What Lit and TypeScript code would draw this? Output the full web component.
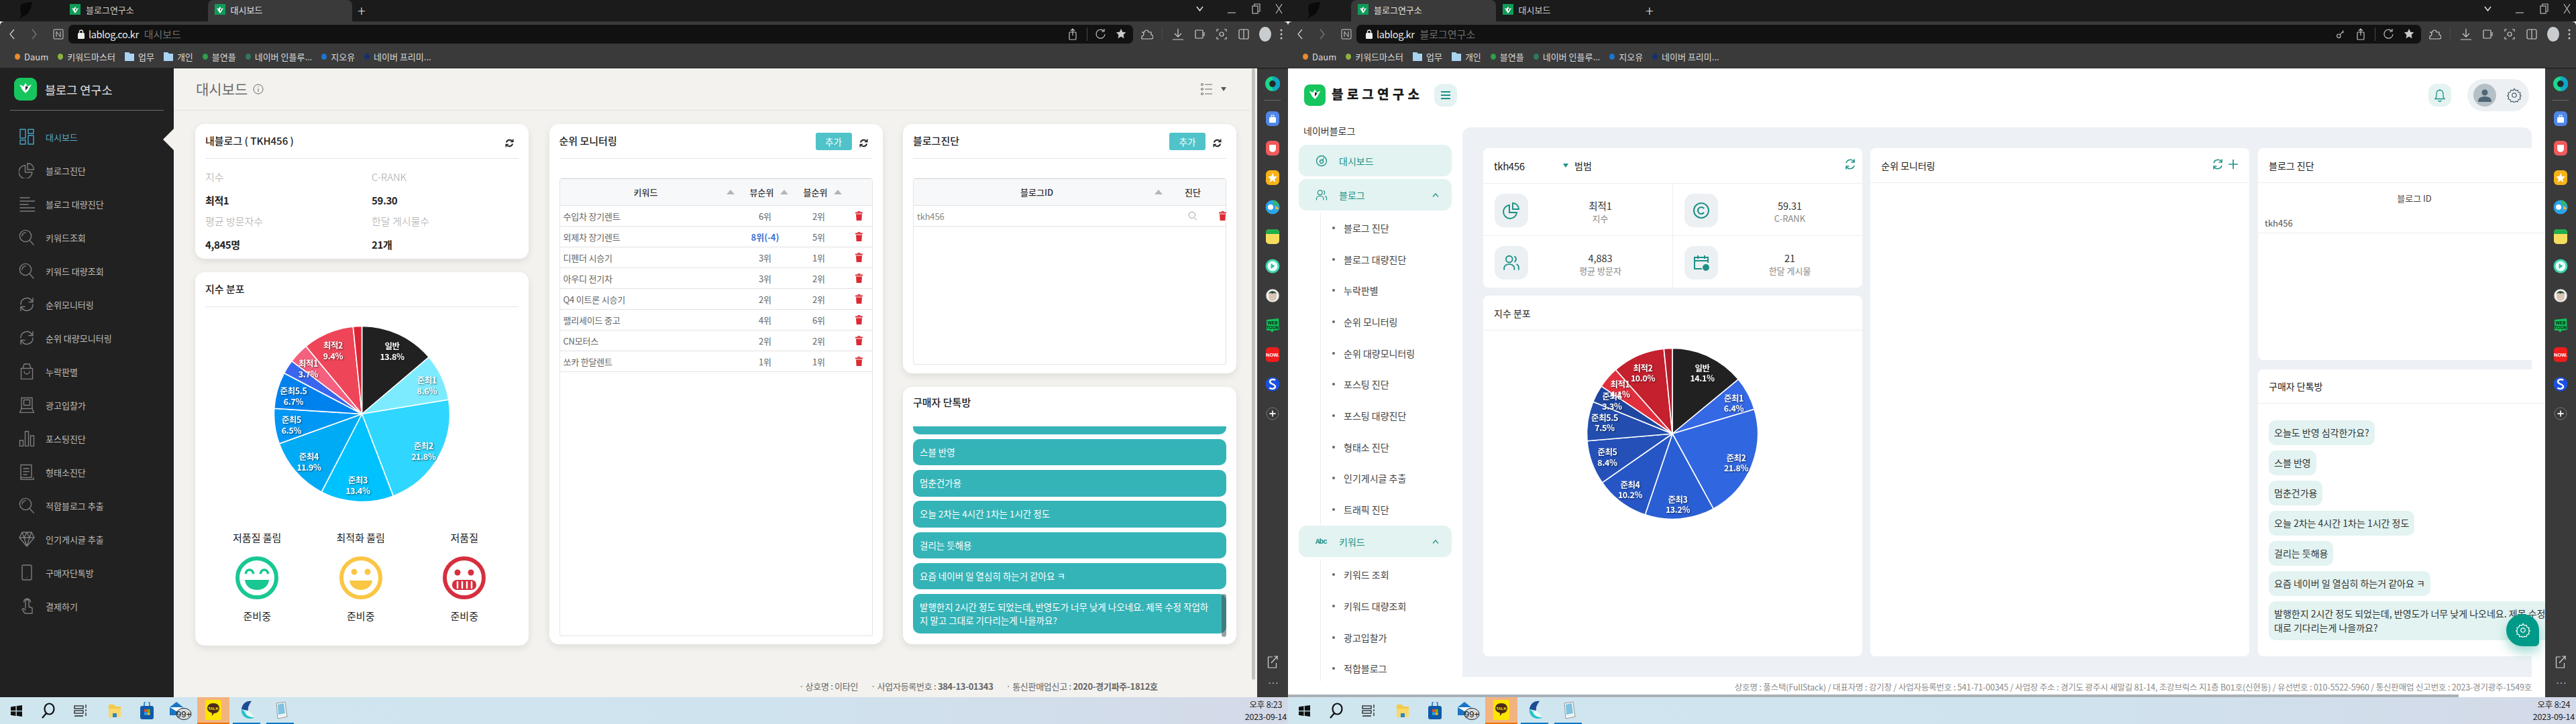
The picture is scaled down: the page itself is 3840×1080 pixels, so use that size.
import { LitElement, html, css, svg, nothing, TemplateResult } from "lit";
import { customElement, property } from "lit/decorators.js";

const FONT = css`"Noto Sans CJK KR", "Noto Sans", sans-serif`;

/* ---------- icon helpers ---------- */
const lineIcon = (body: unknown, size = 24, vb = 24) => html`<svg width=${size} height=${size} viewBox="0 0 ${vb} ${vb}" fill="none" stroke="currentColor" stroke-width="1.4" stroke-linecap="round" stroke-linejoin="round">${body}</svg>`;

const I = {
  dash: svg`<rect x="2" y="1" width="8" height="13"/><rect x="2" y="17" width="8" height="6"/><rect x="14" y="1" width="8" height="6"/><rect x="14" y="10" width="8" height="13"/>`,
  pie: svg`<path d="M9.5 4.5A10 10 0 1 0 20 15H9.5Z"/><path d="M13 1.5A9.5 9.5 0 0 1 22.5 11H13Z"/>`,
  lines: svg`<path d="M2 3h14M2 8h22M2 13h12M2 18h22M2 23h22"/>`,
  search: svg`<circle cx="10" cy="10" r="8.6"/><path d="M16.5 17l5.5 6M5 10a5 5 0 0 1 5-5"/>`,
  sync: svg`<path d="M3 12a9 9 0 0 1 16-6l2 2.5M21 2.5v6h-6M21 12a9 9 0 0 1-16 6l-2-2.5M3 21.5v-6h6"/>`,
  bag: svg`<path d="M3.5 7.5h17v16h-17zM6 7.5L8 1h8l2 6.5M8 12a4 4 0 0 0 8 0"/>`,
  laptop: svg`<rect x="4" y="1.5" width="16" height="16"/><rect x="7.5" y="4.5" width="9" height="8"/><path d="M4 17.5l-2.5 6h21l-2.5-6"/>`,
  bars: svg`<rect x="1.5" y="15" width="5" height="8.5"/><rect x="9.5" y="1.5" width="5" height="22"/><rect x="17.5" y="8" width="5" height="15.5"/>`,
  book: svg`<path d="M3 1.5h16v19H3zM3 20.5v3h19v-3M7 7h8M7 11.5h8M7 16h5"/>`,
  diamond: svg`<path d="M5 2h14l4 8-11 13L1 10zM1 10h22M8 10l4 13 4-13M5 2l3 8 4-8 4 8 3-8"/>`,
  phone: svg`<rect x="5" y="1" width="14" height="22" rx="2"/><path d="M12 19.5h.01"/>`,
  finger: svg`<path d="M10 15V5a2.5 2.5 0 0 1 5 0v8l5 2v8H9l-4-6 2-1.5 3 2.5M7.5 6a5 5 0 0 1 10 0"/>`,
};

const refreshBold = html`<svg class="rf" width="15" height="15" viewBox="0 0 16 16" fill="none" stroke="#222" stroke-width="2"><path d="M13 5.5A5.5 5.5 0 0 0 3 7M3 10.5A5.5 5.5 0 0 0 13 9"/><path d="M13.7 1.5v4.5H9.5M2.3 14.5V10h4.2" stroke-width="1.5"/></svg>`;
const trash = html`<svg width="11" height="14" viewBox="0 0 11 14" fill="#dc2a35"><rect x="3.5" y="0" width="4" height="1.5"/><rect x="0" y="1.5" width="11" height="2" rx=".5"/><path d="M1 4.5h9l-.7 9.5H1.7z"/></svg>`;
const fav = html`<svg width="16" height="16" viewBox="0 0 16 16"><rect width="16" height="16" fill="#0f9d58"/><path d="M3 6l3 1 2-3 2 3 3-1-3 5-2 3-2-3z" fill="#fff"/><path d="M8 7l2 .5-2 3z" fill="#15351f"/></svg>`;
const foxLogo = (w: number, h: number) => html`<svg width=${w} height=${h} viewBox="0 0 34 34"><rect width="34" height="34" rx="9" fill="#17c55f"/><path d="M8 10l6 3 3-5 3 5 6-3-5 9-4 4-4-4z" fill="#fff"/><path d="M17 12l4 2-4 5z" fill="#123"/></svg>`;

/* ---------- pie ---------- */
type Slice = { v: number; c: string };
type Lab = { t: string; p: string; x: number; y: number };
function pie(w: number, h: number, cy: number, r: number, slices: Slice[], labels: Lab[]) {
  const cx = w / 2;
  const total = slices.reduce((s, a) => s + a.v, 0);
  let acc = 0;
  const paths = slices.map((s) => {
    const a0 = (acc / total) * Math.PI * 2;
    acc += s.v;
    const a1 = (acc / total) * Math.PI * 2;
    const large = a1 - a0 > Math.PI ? 1 : 0;
    const p = (a: number) => `${(cx + r * Math.sin(a)).toFixed(2)} ${(cy - r * Math.cos(a)).toFixed(2)}`;
    return svg`<path d="M${cx} ${cy}L${p(a0)}A${r} ${r} 0 ${large} 1 ${p(a1)}Z" fill=${s.c} stroke="#fff" stroke-width="1.6"/>`;
  });
  const txt = labels.map(
    (l) => svg`<text class="pl" x=${cx + l.x} y=${cy + l.y + 4.5}>${l.t}</text><text class="pl" x=${cx + l.x} y=${cy + l.y + 20}>${l.p}</text>`
  );
  return html`<svg class="pie" width=${w} height=${h} viewBox="0 0 ${w} ${h}">${paths}<g class="plg">${txt}</g></svg>`;
}
const pieStyle = css`
  .pie { display: block; }
  .pl { font: 700 12.5px ${FONT}; fill: #fff; text-anchor: middle; letter-spacing: -.4px; }
  .plg { filter: drop-shadow(1px 1px 1px rgba(0,0,0,.55)); }
`;

/* ---------- browser chrome ---------- */
@customElement("browser-window")
class BrowserWindow extends LitElement {
  @property({ type: Number }) active = 0;
  @property() host = "";
  @property() pageTitle = "";
  @property() time = "";
  @property({ type: Boolean }) keyIcon = false;

  static styles = css`
    :host { display: flex; flex-direction: column; width: 1920px; height: 1080px; overflow: hidden; font-family: ${FONT}; position: relative; }
    .tabs { height: 32px; background: #1b1b1b; display: flex; align-items: stretch; flex: none; }
    .deco { width: 94px; flex: none; display: flex; align-items: center; padding-left: 26px; box-sizing: border-box; }
    .tab { width: 215.5px; flex: none; display: flex; align-items: center; gap: 8px; padding: 0 0 4px 10px; box-sizing: border-box; color: #cfcfcf; font-size: 13px; }
    .tab.on { background: #3a3a3a; border-radius: 8px 8px 0 0; color: #e4e4e4; }
    .plus { color: #ddd; font-size: 22px; margin-left: 8px; font-weight: 300; line-height: 30px; }
    .winctl { margin-left: auto; display: flex; align-items: center; color: #bbb; padding-bottom: 6px; }
    .winctl svg { display: block; }
    .toolbar { height: 36px; background: #3a3a3a; flex: none; display: flex; align-items: center; color: #c8c8c8; border-radius: 6px 6px 0 0; padding-top: 1px; box-sizing: border-box; }
    .nav { width: 102px; flex: none; display: flex; align-items: center; padding-left: 13px; box-sizing: border-box; gap: 23px; }
    .addr { width: 1587px; height: 28px; background: #111; border-radius: 7px; flex: none; display: flex; align-items: center; padding-left: 14px; box-sizing: border-box; font-size: 14.5px; }
    .addr .h { color: #e8e8e8; margin-left: 6px; letter-spacing: -.4px; }
    .addr .t { color: #6f6f6f; margin-left: 8px; font-size: 15px; }
    .addr .rt { margin-left: auto; display: flex; align-items: center; gap: 11px; padding-right: 8px; color: #c4c4c4; }
    .sep { width: 1px; height: 20px; background: #4a4a4a; }
    .tools { flex: 1; display: flex; align-items: center; justify-content: space-between; padding: 0 8px 0 10px; color: #d0d0d0; }
    .av { width: 18px; height: 22px; border-radius: 50%; background: #c9cdd0; }
    .marks { height: 34px; background: #3a3a3a; flex: none; display: flex; align-items: center; padding-left: 22px; color: #dcdcdc; font-size: 13px; box-shadow: inset 0 -1px 0 #222; padding-bottom: 2px; box-sizing: border-box; }
    .mk { display: flex; align-items: center; gap: 6px; margin-right: 14px; }
    .dot { width: 8px; height: 9px; border-radius: 50%; }
    .content { flex: 1; min-height: 0; display: flex; }
    .page { flex: 1; min-width: 0; position: relative; overflow: hidden; }
    .edge { width: 46px; flex: none; background: #3a3a3a; display: flex; flex-direction: column; align-items: center; box-shadow: inset 0 1px 0 #2a2a2a; padding-bottom: 6px; box-sizing: border-box; }
    .ei { height: 44px; flex: none; display: flex; align-items: center; justify-content: center; }
    .ei:first-child { margin-top: 1px; }
    .ediv { width: 24px; height: 1px; background: #666; margin: 2px 0 5px; flex: none; }
    .spacer { flex: 1; }
    .eb { height: 31px; flex: none; display: flex; align-items: center; justify-content: center; color: #d5d5d5; }
    .more { font-size: 13px; letter-spacing: -2px; }
    .taskbar { height: 40px; flex: none; background: linear-gradient(90deg, #cfe6ef 0%, #cfe3ee 60%, #d4d9e8 100%); display: flex; align-items: stretch; position: relative; }
    .tb { width: 48px; flex: none; display: flex; align-items: center; justify-content: center; box-sizing: border-box; }
    .tb.folder { margin-left: 3px; }
    .tb.mail { width: 51px; }
    .tb.hot { background: #f3b37f; border-bottom: 2px solid #f07000; }
    .tb.run { box-shadow: inset 0 -2px 0 #0a78c8; width: 41px; }
    .tb.r1 { margin: 0 2px 0 5px; }
    .tb.r2 { margin: 0 0 0 7px; }
    .clock { margin-left: auto; text-align: center; color: #222; font-size: 12.5px; line-height: 18px; padding: 2px 2px 0 0; letter-spacing: -.2px; }
  `;

  tabs() {
    return [0, 1].map((i) => html`<div class="tab ${this.active === i ? "on" : ""}">${fav}<span>${i === 0 ? "블로그연구소" : "대시보드"}</span></div>`);
  }

  render() {
    const marks: [string, string][] = [["Daum", "#e88a2d"], ["키워드마스터", "#8db33c"], ["업무", "f"], ["개인", "f"], ["블연플", "#2f9e4a"], ["네이버 인플루...", "#2f7a5b"], ["지오유", "#1976d2"], ["네이버 프리미...", "#13306e"]];
    const tic = (b: unknown, s = 20) => html`<svg width=${s} height=${s} viewBox="0 0 20 20" fill="none" stroke="currentColor" stroke-width="1.2">${b}</svg>`;
    return html`
      <div class="tabs">
        <div class="deco"><svg width="24" height="28" viewBox="0 0 24 28"><path d="M6 4c5-2 13-4 16-2-1 8-5 18-13 20l-6 4 3-7C3 14 4 8 6 4z" fill="#0a0a0a"/></svg></div>
        ${this.tabs()}
        <div class="plus">+</div>
        <div class="winctl">
          <svg width="140" height="20" viewBox="0 0 140 20" fill="none" stroke="currentColor" stroke-width="1.2"><path d="M4 7l4.5 6L13 7" stroke="#ddd" stroke-width="1.6"/><path d="M50 16h12"/><rect x="87" y="6" width="8" height="11"/><path d="M90 6V3h8v11h-3"/><path d="M122 3l9 14M131 3l-9 14"/></svg>
        </div>
      </div>
      <div class="toolbar">
        <div class="nav">
          <svg width="10" height="16" viewBox="0 0 10 16" fill="none" stroke="#ccc" stroke-width="1.3"><path d="M8 1L2 8l6 7"/></svg>
          <svg width="10" height="16" viewBox="0 0 10 16" fill="none" stroke="#777" stroke-width="1.3"><path d="M2 1l6 7-6 7"/></svg>
          <svg width="16" height="16" viewBox="0 0 16 16" fill="none" stroke="#ccc"><rect x="1" y="1" width="14" height="14" rx="1"/><path d="M5 12V4l6 8V4"/></svg>
        </div>
        <div class="addr">
          <svg width="10" height="14" viewBox="0 0 10 14"><rect x="0" y="5" width="10" height="9" rx="1.5" fill="#eee"/><path d="M2.5 5V3.5a2.5 2.5 0 0 1 5 0V5" fill="none" stroke="#eee" stroke-width="1.3"/></svg>
          <span class="h">${this.host}</span><span class="t">${this.pageTitle}</span>
          <div class="rt">
            ${this.keyIcon ? tic(svg`<circle cx="7" cy="13" r="3"/><path d="M9 11l6-7M13 6l2 2"/>`, 18) : nothing}
            ${tic(svg`<rect x="5" y="7" width="10" height="11" rx="1"/><path d="M10 12V2M7 5l3-3 3 3"/>`)}
            <div class="sep"></div>
            ${tic(svg`<path d="M15 10a6.5 6.5 0 1 1-2-5"/><path d="M14 2v4h-4"/>`)}
            <svg width="18" height="18" viewBox="0 0 20 20" fill="#c9c9c9"><path d="M9 1l2.5 5.5L17 7l-4 4 1 6-5-3-5 3 1-6-4-4 5.5-.5z"/></svg>
          </div>
        </div>
        <div class="tools">
          ${tic(svg`<path d="M3 7h4a3 3 0 1 1 6 0h4v4a3 3 0 1 1 0 6H3v-4a3 3 0 1 0 0-6z"/>`)}
          <div class="sep"></div>
          ${tic(svg`<path d="M10 2v12M5 9l5 5 5-5M2 18h16"/>`)}
          ${tic(svg`<rect x="3" y="4" width="11" height="12" rx="1"/><path d="M16 7v6"/>`)}
          ${tic(svg`<path d="M3 6V3h3M14 3h3v3M17 14v3h-3M6 17H3v-3"/><circle cx="10" cy="10" r="3"/>`)}
          ${tic(svg`<rect x="3" y="3" width="14" height="14" rx="2"/><path d="M10 3v14"/>`)}
          <div class="av"></div>
          <svg width="4" height="16" viewBox="0 0 4 16" fill="#ccc"><circle cx="2" cy="2" r="1.5"/><circle cx="2" cy="8" r="1.5"/><circle cx="2" cy="14" r="1.5"/></svg>
        </div>
      </div>
      <div class="marks">
        ${marks.map(([t, c]) => html`<div class="mk">${c === "f"
          ? html`<svg width="14" height="13" viewBox="0 0 14 13"><path d="M0 0h6l2 2h6v11H0z" fill="#a8d4f2"/></svg>`
          : html`<span class="dot" style="background:${c}"></span>`}<span>${t}</span></div>`)}
      </div>
      <div class="content">
        <div class="page"><slot></slot></div>
        <div class="edge">
          <div class="ei"><svg width="22" height="22"><circle cx="11" cy="11" r="8" fill="none" stroke="#1dd68c" stroke-width="6"/><path d="M11 3a8 8 0 0 1 0 16" fill="none" stroke="#0fa6c9" stroke-width="6"/><circle cx="11" cy="11" r="4.5" fill="#1d2a2a"/></svg></div>
          <div class="ediv"></div>
          <div class="ei"><svg width="22" height="22"><rect width="20" height="22" x="1" rx="6" fill="#4f86e8"/><rect x="6" y="9" width="10" height="8" fill="#fff"/><rect x="9" y="6" width="4" height="3" fill="none" stroke="#fff"/></svg></div>
          <div class="ei"><svg width="22" height="22"><rect x="1" width="20" height="22" rx="6" fill="#f05a5a"/><path d="M6 6h10v6a5 5 0 0 1-10 0z" fill="#fff"/></svg></div>
          <div class="ei"><svg width="22" height="22"><rect x="1" width="20" height="22" rx="6" fill="#f7b316"/><path d="M11 4l2 5 5 .5-4 3.5 1.2 5L11 15l-4.2 3L8 13 4 9.5 9 9z" fill="#fff"/></svg></div>
          <div class="ei"><svg width="22" height="22"><circle cx="11" cy="11" r="10.5" fill="#2aa4e8"/><path d="M11 .5a10.5 10.5 0 0 1 10 8H13z" fill="#33b56a"/><circle cx="8" cy="11" r="4" fill="#fff"/><path d="M15 9l6 4-6 2z" fill="#f0b429"/></svg></div>
          <div class="ei"><svg width="22" height="22"><rect x="1" width="20" height="22" rx="5" fill="#f7dd5e"/><path d="M1 7V5a5 5 0 0 1 5-5h10a5 5 0 0 1 5 5v2z" fill="#1fae4d"/></svg></div>
          <div class="ei"><svg width="22" height="22"><circle cx="11" cy="11" r="10.5" fill="#40d6b0"/><circle cx="11" cy="11" r="7.5" fill="#f0fffb"/><path d="M8.5 7l6 4-6 4z" fill="#35bf9f"/></svg></div>
          <div class="ei"><svg width="22" height="22"><circle cx="11" cy="11" r="10" fill="#f4f4f4" stroke="#666"/><path d="M5 9a6 5 0 0 1 12 0v4a6 6 0 0 1-12 0z" fill="#d9c6b6"/><path d="M5 8c2-5 10-5 12 0l-4-1-2 1-3-1z" fill="#2d4a3a"/></svg></div>
          <div class="ei"><svg width="22" height="22"><path d="M2 3l18-2 1 17-8 1-3 3-2-3-6 0z" fill="#13c25c"/><text x="11" y="10" font-size="6.5" font-weight="700" text-anchor="middle" fill="#0a2a12" font-family="Liberation Sans">WEB</text><text x="11" y="16.5" font-size="6.5" font-weight="700" text-anchor="middle" fill="#0a2a12" font-family="Liberation Sans">TOON</text></svg></div>
          <div class="ei"><svg width="22" height="22"><rect x="1" width="20" height="22" rx="5" fill="#ef1c1c"/><text x="11" y="14" font-size="7.5" font-weight="700" text-anchor="middle" fill="#fff" font-family="Liberation Sans">NOW.</text></svg></div>
          <div class="ei"><svg width="22" height="22"><circle cx="11" cy="11" r="10.5" fill="#1c50e0"/><path d="M15 5c-3-2-8-1-8 2.5S15 11 15 14.5 10 19 6.5 16.5" fill="none" stroke="#fff" stroke-width="2.4"/></svg></div>
          <div class="ei"><svg width="20" height="22"><circle cx="10" cy="11" r="9" fill="none" stroke="#777"/><path d="M10 6.5v9M5.5 11h9" stroke="#f0f0f0" stroke-width="1.8"/></svg></div>
          <div class="spacer"></div>
          <div class="eb"><svg width="18" height="22" viewBox="0 0 18 22" fill="none" stroke="currentColor" stroke-width="1.2"><path d="M9 3H2.5v16h12v-7M7 12L16 2M11 2h5v5"/></svg></div>
          <div class="eb more">···</div>
        </div>
      </div>
      <div class="taskbar">
        <div class="tb"><svg width="17" height="17" viewBox="0 0 17 17" fill="#111"><path d="M0 2.5L7.5 1.2V8H0zM8.8 1L17 0v8H8.8zM0 9.2h7.5V16L0 14.8zM8.8 9.2H17V17l-8.2-1.2z"/></svg></div>
        <div class="tb"><svg width="22" height="24" viewBox="0 0 22 24" fill="none" stroke="#111" stroke-width="2.2"><ellipse cx="12.5" cy="9.5" rx="7" ry="8"/><path d="M8 16l-6 7"/></svg></div>
        <div class="tb"><svg width="20" height="20" viewBox="0 0 20 20" fill="none" stroke="#222" stroke-width="1.3"><rect x="1" y="3" width="13" height="4"/><rect x="1" y="10" width="13" height="4"/><path d="M1 18h13M18 1v5M18 8v3M18 13v5"/></svg></div>
        <div class="tb folder"><svg width="24" height="24" viewBox="0 0 24 24"><path d="M3 3h8l2 3h8v16H3z" fill="#f3c945"/><path d="M3 9h18v13H3z" fill="#fad86a"/><path d="M9 22v-6h6v6z" fill="#2b87c9"/></svg></div>
        <div class="tb"><svg width="24" height="26" viewBox="0 0 24 26"><rect x="2" y="6" width="20" height="20" rx="3" fill="#0f5aa8"/><path d="M8 6V3a4 4 0 0 1 8 0v3" fill="none" stroke="#2d7fd0" stroke-width="1.8"/><rect x="8" y="11" width="4" height="4" fill="#e94e2a"/><rect x="12.5" y="11" width="4" height="4" fill="#7fba00"/><rect x="8" y="15.5" width="4" height="4" fill="#2fa6e8"/><rect x="12.5" y="15.5" width="4" height="4" fill="#ffb900"/></svg></div>
        <div class="tb mail"><svg width="36" height="30" viewBox="0 0 36 30"><path d="M2 10l10-8 10 8v12H2z" fill="#1a75c4"/><path d="M2 10l10 6 10-6" fill="#fff"/><ellipse cx="23" cy="20" rx="11" ry="8.5" fill="#d8dcdf" stroke="#222"/><text x="23" y="25" font-size="13" text-anchor="middle" fill="#111" font-family="Liberation Sans">99+</text></svg></div>
        <div class="tb hot"><svg width="24" height="30" viewBox="0 0 24 30"><rect width="24" height="30" rx="3" fill="#fee500"/><path d="M12 5c6 0 9 3.5 9 7.5s-3 7.5-8 7.5l-3 4v-4.5c-4-1-7-3.5-7-7C3 8.5 6 5 12 5z" fill="#4a2c1a"/><text x="12" y="15" font-size="6" text-anchor="middle" fill="#fee500" font-weight="700" font-family="Liberation Sans">TALK</text></svg></div>
        <div class="tb run r1"><svg width="26" height="32" viewBox="0 0 26 32"><path d="M5 14C6 6 12 1 20 2c-4 5-6 10-5 14z" fill="#1c4c96"/><path d="M5 14c-1 8 5 14 13 14 3 0 5-1 6-2-6 0-12-2-14-8z" fill="#22c3c8"/><path d="M10 18c2 6 8 8 14 8-3-4-6-8-9-10z" fill="#e9f6f6"/></svg></div>
        <div class="tb run r2"><svg width="24" height="30" viewBox="0 0 24 30"><path d="M6 4l13-2 3 22-14 3z" fill="#eef4f6" stroke="#999"/><path d="M8 6l9-2 2 15-10 2z" fill="#7fc3e0"/></svg></div>
        <div class="clock"><div>오후 ${this.time}</div><div>2023-09-14</div></div>
      </div>
    `;
  }
}

/* ---------- left: old dashboard ---------- */
const oldMenu: [string, keyof typeof I][] = [
  ["대시보드", "dash"], ["블로그진단", "pie"], ["블로그 대량진단", "lines"], ["키워드조회", "search"], ["키워드 대량조회", "search"], ["순위모니터링", "sync"], ["순위 대량모니터링", "sync"], ["누락판별", "bag"], ["광고입찰가", "laptop"], ["포스팅진단", "bars"], ["형태소진단", "book"], ["적합블로그 추출", "search"], ["인기게시글 추출", "diamond"], ["구매자단톡방", "phone"], ["결제하기", "finger"],
];
const rows: [string, string, string][] = [
  ["수입차 장기렌트", "6위", "2위"], ["외제차 장기렌트", "8위(-4)", "5위"], ["디펜더 시승기", "3위", "1위"], ["아우디 전기차", "3위", "2위"], ["Q4 이트론 시승기", "2위", "2위"], ["팰리세이드 중고", "4위", "6위"], ["CN모터스", "2위", "2위"], ["쏘카 한달렌트", "1위", "1위"],
];
const oldChats = ["스블 반영", "멈춘건가용", "오늘 2차는 4시간 1차는 1시간 정도", "걸리는 듯해용", "요즘 네이버 일 열심히 하는거 같아요 ㅋ", "발행한지 2시간 정도 되었는데, 반영도가 너무 낮게 나오네요. 제목 수정 작업하지 말고 그대로 기다리는게 나을까요?"];

@customElement("old-dash")
class OldDash extends LitElement {
  static styles = [pieStyle, css`
    :host { display: flex; height: 100%; font-family: ${FONT}; background: #f3f2ee; color: #222; }
    .side { width: 259px; flex: none; background: #212121; position: relative; }
    .brand { height: 62px; margin: 0 15px; border-bottom: 1px solid #6e6e6e; display: flex; align-items: center; padding-left: 6px; gap: 12px; color: #e6e6e6; font-size: 17.5px; }
    .brand svg { display: block; }
    .menu { padding-top: 14px; }
    .mi { height: 50px; display: flex; align-items: center; padding-left: 28px; gap: 16px; color: #7d7d7d; font-size: 13px; }
    .mi span { color: #bdbdbd; }
    .mi.on { color: #4ba3c7; position: relative; }
    .mi.on span { color: #57aac9; }
    .mi svg { display: block; flex: none; }
    .notch { position: absolute; right: 0; top: 90px; width: 0; height: 0; border-style: solid; border-width: 16px 16px 16px 0; border-color: transparent #f3f2ee transparent transparent; }
    .main { flex: 1; min-width: 0; display: flex; flex-direction: column; position: relative; }
    .top { height: 62px; border-bottom: 1px solid #dfdfdc; display: flex; align-items: center; padding: 0 36px 0 33px; box-sizing: content-box; flex: none; margin-right: 10px; }
    .top h1 { font-size: 21px; font-weight: 400; color: #6b6b6b; margin: -2px 8px 0 0; }
    .top .r { margin-left: auto; display: flex; align-items: center; gap: 12px; color: #666; }
    .grid { display: grid; grid-template-columns: 497px 497px 497px; column-gap: 30.5px; padding: 20px 0 0 32px; }
    .col { display: flex; flex-direction: column; gap: 20px; }
    .card { background: #fff; border-radius: 14px; box-shadow: 0 4px 12px rgba(0,0,0,.09); padding: 0 15px; box-sizing: border-box; position: relative; }
    .h201 { height: 201px; } .h556 { height: 556.5px; } .h776 { height: 776px; } .h372 { height: 372px; } .h384 { height: 384px; }
    .ch { height: 52px; border-bottom: 1px solid #e6e6e6; display: flex; align-items: center; font-size: 15px; font-weight: 500; color: #222; padding-bottom: 3px; box-sizing: border-box; }
    .ch.nb { border: 0; height: 59px; padding-bottom: 14px; }
    .ch .sp { flex: 1; }
    .rf { margin: 8px 6px 0 8px; display: block; flex: none; }
    .btn { width: 54px; height: 26px; background: #4fc3c9; color: #fff; border-radius: 3px; display: flex; align-items: center; justify-content: center; font-size: 13.5px; font-weight: 400; margin: 3px 2px 0 0; }
    .stats { display: grid; grid-template-columns: 248px 1fr; padding-top: 10px; }
    .stats div { height: 33px; box-sizing: border-box; display: flex; align-items: center; font-size: 15px; color: #a9a9a9; font-weight: 300; }
    .stats .v { color: #222; font-weight: 700; font-size: 15px; letter-spacing: -.4px; padding-top: 4px; }
    .pierow { padding-top: 8px; margin: 0 -15px; }
    .em { display: grid; grid-template-columns: repeat(3, 154.5px); margin: 24px 0 0 0; text-align: center; font-size: 15px; color: #222; }
    .em .lb { height: 24px; line-height: 24px; }
    .em svg { display: block; margin: 16px auto 13px; }
    .tbl { margin-top: 29px; border: 1px solid #e4e4e4; border-top-color: #cfcfcf; border-radius: 4px; box-sizing: border-box; }
    .t683 { height: 683px; } .t278 { height: 278px; }
    .tr { display: grid; height: 31px; border-bottom: 1px solid #e2e2e2; align-items: center; font-size: 13px; color: #666; box-sizing: border-box; }
    .tr.h { height: 40px; background: #f7f8fa; color: #333; font-weight: 500; }
    .kw { grid-template-columns: 266px 80px 80px 1fr; }
    .idt { grid-template-columns: 377px 78px 1fr; }
    .c { text-align: center; }
    .l { padding-left: 5px; letter-spacing: -.2px; }
    .l.g { color: #888; }
    .ico { display: flex; justify-content: center; color: #888; }
    .s { display: grid; grid-template-columns: 1fr 12px; padding: 0 6px 0 8px; align-items: center; text-align: center; }
    .tri { width: 0; height: 0; border-style: solid; border-width: 0 6px 7px 6px; border-color: transparent transparent #b5b5b5 transparent; }
    .blue { color: #3d74d6; font-weight: 700; }
    .chat { height: 314px; overflow: hidden; display: flex; flex-direction: column; gap: 6.8px; position: relative; font-size: 13.5px; font-weight: 400; }
    .b { background: #35b4b8; color: #fff; border-radius: 10px; padding: 10px 18px 10px 10px; line-height: 19.5px; flex: none; }
    .b.cut { height: 12px; padding: 0; border-radius: 0 0 10px 10px; }
    .thumb { position: absolute; right: 0; bottom: 0; width: 7px; height: 64px; background: rgba(70,80,80,.55); border-radius: 4px; }
    .foot { display: flex; padding: 51px 0 0 932px; font-size: 13px; color: #666; gap: 19px; white-space: nowrap; letter-spacing: -.3px; }
    .foot b { font-weight: 700; }
    .scroll { position: absolute; right: 3px; top: 0; width: 5px; height: 912px; background: #c2c1bd; border-radius: 3px; }
  `];

  render() {
    const pieData: Slice[] = [
      { v: 13.8, c: "#212121" }, { v: 8.6, c: "#7debff" }, { v: 21.8, c: "#2fd6ff" }, { v: 13.4, c: "#00c2ff" }, { v: 11.9, c: "#00abf5" }, { v: 6.5, c: "#0097f5" }, { v: 6.7, c: "#0082ee" }, { v: 2.6, c: "#3a66ee" }, { v: 3.7, c: "#f5607e" }, { v: 9.4, c: "#ee4558" }, { v: 1.6, c: "#dc2636" },
    ];
    const labs: Lab[] = [
      { t: "일반", p: "13.8%", x: 45, y: -101 }, { t: "준최1", p: "8.6%", x: 97, y: -50 }, { t: "준최2", p: "21.8%", x: 92, y: 48 }, { t: "준최3", p: "13.4%", x: -6, y: 99 }, { t: "준최4", p: "11.9%", x: -79, y: 64 }, { t: "준최5", p: "6.5%", x: -105, y: 9 }, { t: "준최5.5", p: "6.7%", x: -102, y: -34 }, { t: "최적1", p: "3.7%", x: -80, y: -75 }, { t: "최적2", p: "9.4%", x: -43, y: -102 },
    ];
    const faces = [
      ["저품질 풀림", "#19c793", "happy"], ["최적화 풀림", "#fbc644", "smile"], ["저품질", "#d62f3f", "grim"],
    ];
    return html`
      <aside class="side">
        <div class="brand">${foxLogo(34, 34)}<span>블로그 연구소</span></div>
        <div class="menu">
          ${oldMenu.map(([t, ic], i) => html`<div class="mi ${i === 0 ? "on" : ""}">${lineIcon(I[ic])}<span>${t}</span></div>`)}
        </div>
        <div class="notch"></div>
      </aside>
      <main class="main">
        <div class="top">
          <h1>대시보드</h1>
          <svg width="16" height="16" viewBox="0 0 16 16" fill="none" stroke="#666"><circle cx="8" cy="8" r="7"/><path d="M8 7v5M8 4v1.2"/></svg>
          <div class="r">
            <svg width="18" height="20" viewBox="0 0 18 20" fill="none" stroke="#666"><circle cx="2" cy="3" r="1.5"/><circle cx="2" cy="10" r="1.5"/><circle cx="2" cy="17" r="1.5"/><path d="M6 3h11M6 10h11M6 17h11"/></svg>
            <svg width="8" height="6" viewBox="0 0 8 6" fill="#555"><path d="M0 0h8L4 6z"/></svg>
          </div>
        </div>
        <div class="grid">
          <div class="col">
            <section class="card h201">
              <div class="ch"><span>내블로그 ( TKH456 )</span><span class="sp"></span>${refreshBold}</div>
              <div class="stats">
                <div>지수</div><div>C-RANK</div>
                <div class="v">최적1</div><div class="v">59.30</div>
                <div>평균 방문자수</div><div>한달 게시물수</div>
                <div class="v">4,845명</div><div class="v">21개</div>
              </div>
            </section>
            <section class="card h556">
              <div class="ch"><span>지수 분포</span></div>
              <div class="pierow">${pie(497, 300, 151.5, 131, pieData, labs)}</div>
              <div class="em">
                ${faces.map(([l]) => html`<div class="lb">${l}</div>`)}
                ${faces.map(([, c, k]) => html`<div>
                  <svg width="64" height="64" viewBox="0 0 64 64">
                    <circle cx="32" cy="32" r="29" fill="#fff" stroke=${c} stroke-width="6"/>
                    ${k === "happy" ? svg`<path d="M15 26c2-8 10-8 12 0M37 26c2-8 10-8 12 0" fill="none" stroke=${c} stroke-width="3.5"/><path d="M14 35h36c-1 10-9 15-18 15s-17-5-18-15z" fill=${c}/>` : nothing}
                    ${k === "smile" ? svg`<circle cx="22" cy="23" r="4.5" fill=${c}/><circle cx="42" cy="23" r="4.5" fill=${c}/><path d="M15 36h34c-1 9-9 14-17 14s-16-5-17-14z" fill=${c}/>` : nothing}
                    ${k === "grim" ? svg`<circle cx="22" cy="24" r="4.5" fill=${c}/><circle cx="42" cy="24" r="4.5" fill=${c}/><rect x="14" y="35" width="36" height="15" rx="7" fill=${c}/><path d="M22 38v9M29 38v9M36 38v9M43 38v9" stroke="#fff" stroke-width="2.5" stroke-linecap="round"/>` : nothing}
                  </svg><div class="lb">준비중</div></div>`)}
              </div>
            </section>
          </div>
          <div class="col">
            <section class="card h776">
              <div class="ch"><span>순위 모니터링</span><span class="sp"></span><div class="btn">추가</div>${refreshBold}</div>
              <div class="tbl t683">
                <div class="tr h kw">
                  <div class="s"><span>키워드</span><i class="tri"></i></div>
                  <div class="s"><span>뷰순위</span><i class="tri"></i></div>
                  <div class="s"><span>블순위</span><i class="tri"></i></div>
                  <div></div>
                </div>
                ${rows.map(([k, a, b]) => html`<div class="tr kw"><div class="l">${k}</div><div class="c ${a.includes("(") ? "blue" : ""}">${a}</div><div class="c">${b}</div><div class="ico">${trash}</div></div>`)}
              </div>
            </section>
          </div>
          <div class="col">
            <section class="card h372">
              <div class="ch"><span>블로그진단</span><span class="sp"></span><div class="btn">추가</div>${refreshBold}</div>
              <div class="tbl t278">
                <div class="tr h idt">
                  <div class="s"><span>블로그ID</span><i class="tri"></i></div>
                  <div class="c">진단</div>
                  <div></div>
                </div>
                <div class="tr idt"><div class="l g">tkh456</div><div class="ico"><svg width="14" height="14" viewBox="0 0 24 24" fill="none" stroke="#888" stroke-width="1.5"><circle cx="10" cy="10" r="8"/><path d="M16 17l6 6"/></svg></div><div class="ico">${trash}</div></div>
              </div>
            </section>
            <section class="card h384">
              <div class="ch nb"><span>구매자 단톡방</span></div>
              <div class="chat">
                <div class="b cut"></div>
                ${oldChats.map((c) => html`<div class="b">${c}</div>`)}
                <i class="thumb"></i>
              </div>
            </section>
          </div>
        </div>
        <div class="foot">
          <span>· 상호명 : 이타인</span><span>· 사업자등록번호 : <b>384-13-01343</b></span><span>· 통신판매업신고 : <b>2020-경기파주-1812호</b></span>
        </div>
        <div class="scroll"></div>
      </main>
    `;
  }
}

/* ---------- right: new dashboard ---------- */
const sub1 = ["블로그 진단", "블로그 대량진단", "누락판별", "순위 모니터링", "순위 대량모니터링", "포스팅 진단", "포스팅 대량진단", "형태소 진단", "인기게시글 추출", "트래픽 진단"];
const sub2 = ["키워드 조회", "키워드 대량조회", "광고입찰가", "적합블로그"];
const newChats = ["오늘도 반영 심각한가요?", "스블 반영", "멈춘건가용", "오늘 2차는 4시간 1차는 1시간 정도", "걸리는 듯해용", "요즘 네이버 일 열심히 하는거 같아요 ㅋ", "발행한지 2시간 정도 되었는데, 반영도가 너무 낮게 나오네요. 제목 수정 작업하지 말고 그대로 기다리는게 나을까요?"];
const TEAL = "#1c9186";

@customElement("new-dash")
class NewDash extends LitElement {
  static styles = [pieStyle, css`
    :host { display: flex; flex-direction: column; height: 100%; font-family: ${FONT}; background: #fff; color: #222; position: relative; }
    .bar { height: 80px; flex: none; display: flex; align-items: center; padding: 0 24px; box-sizing: border-box; }
    .bar svg { display: block; }
    .word { font-size: 19px; font-weight: 900; letter-spacing: 5.2px; color: #1a1a1a; margin: -6px 0 0 9px; width: 153px; white-space: nowrap; }
    .iconbtn { width: 34px; height: 34px; border-radius: 12px; background: #e4f3f1; display: flex; align-items: center; justify-content: center; flex: none; color: #1c9186; }
    .grow { flex: 1; }
    .pill { width: 92px; height: 48px; border-radius: 24px; background: #ecf0f3; margin-left: 24px; display: flex; align-items: center; padding-left: 9px; box-sizing: border-box; gap: 16px; }
    .gearc { color: #4b5b66; display: block; }
    .body { flex: 1; min-height: 0; display: flex; }
    .nav { width: 260px; flex: none; padding: 0 0 0 16px; box-sizing: border-box; overflow: hidden; margin-bottom: -5px; }
    .cap { font-size: 14px; line-height: 26px; padding: 0 0 8px 7px; color: #333; }
    .mi { width: 228px; height: 47px; border-radius: 12px; background: #e3f3f1; color: #1c9186; display: flex; align-items: center; padding: 0 0 0 25px; box-sizing: border-box; gap: 17px; font-size: 14px; margin-bottom: 4px; }
    .mi.e { margin-bottom: 2.6px; }
    .mi.k { margin-top: 1px; }
    .mi .txt { flex: 1; }
    .mi .car { margin-right: 19px; display: block; }
    .abc { width: 18px; font: 700 11px "Liberation Mono", monospace; letter-spacing: -1px; }
    .subs { margin: 0 0 0 32px; border-left: 1px solid #e9edf0; }
    .sub { height: 46.7px; display: flex; align-items: center; padding-left: 17px; gap: 13px; font-size: 14px; color: #444; }
    .sub i { width: 4px; height: 4px; border-radius: 50%; background: #666; flex: none; }
    .main { width: 1594px; height: 820px; margin-top: 8px; flex: none; background: #edf1f5; border-radius: 12px 12px 0 0; display: grid; grid-template-columns: 564.5px 565px 565px; column-gap: 12.75px; padding: 31px 0 31px 31px; box-sizing: border-box; }
    .col { display: flex; flex-direction: column; min-width: 0; }
    .g12 { gap: 12px; } .g14 { gap: 14px; }
    .card { background: #fff; border-radius: 8px; box-sizing: border-box; }
    .n208 { height: 208px; } .n538 { height: 538px; } .n758 { height: 758px; } .n316 { height: 316px; } .n428 { height: 428px; }
    .ch { height: 52px; border-bottom: 1px solid #eceef0; display: flex; align-items: center; padding: 0 17px 0 16px; font-size: 14px; box-sizing: border-box; color: #222; flex: none; }
    .ch svg { display: block; }
    .rfn { margin-top: -4px; }
    .ch.a { height: 53px; }
    .ch.a .rfn { margin-right: -8px; }
    .ch.t { height: 51px; }
    .who { width: 103px; font-size: 15px; letter-spacing: -.4px; }
    .owner { margin-left: 9px; }
    .plusi { margin: -4px 0 0 7px; }
    .st { display: grid; grid-template-columns: 283px 281px; }
    .cell { height: 77.5px; display: flex; align-items: center; padding: 4px 0 0 17px; box-sizing: border-box; border-bottom: 1px solid #eceef0; text-align: center; }
    .cell:nth-child(odd) { border-right: 1px solid #eceef0; }
    .cell:nth-last-child(-n+2) { border-bottom: 0; }
    .tile { width: 50px; height: 50px; border-radius: 14px; background: #ecf0f3; display: flex; align-items: center; justify-content: center; flex: none; color: #1c9186; }
    .cv { flex: 1; font-size: 14.5px; color: #333; line-height: 19px; padding-top: 4px; }
    .cv small { display: block; font-size: 13px; color: #888; }
    .idh { height: 44px; display: flex; align-items: center; justify-content: center; width: 466px; font-size: 13px; color: #444; }
    .idr { height: 30px; border-bottom: 1px solid #eceef0; display: flex; align-items: center; padding-left: 10px; font-size: 13px; color: #555; }
    .chat { padding: 25px 0 0 16px; display: flex; flex-direction: column; align-items: flex-start; gap: 8px; }
    .b { background: #e2f3f1; border-radius: 10px; padding: 8px; font-size: 14px; line-height: 21px; color: #333; box-sizing: border-box; max-width: 526px; flex: none; }
    .foot { height: 25px; flex: none; font-size: 12.5px; color: #8a8a8a; text-align: right; padding-right: 20px; line-height: 28px; white-space: nowrap; letter-spacing: -.17px; }
    .hs { height: 4px; flex: none; }
    .hs div { width: 1745px; height: 4px; background: #a9b0b6; }
    .fab { position: absolute; right: 9px; bottom: 76px; width: 49px; height: 48px; border-radius: 50% 50% 6px 50%; background: #009a88; box-shadow: 0 9px 16px rgba(0,154,136,.35); display: flex; align-items: center; justify-content: center; color: #fff; }
  `];

  render() {
    const data: Slice[] = [
      { v: 14.1, c: "#212121" }, { v: 6.4, c: "#3468e4" }, { v: 21.8, c: "#3066e0" }, { v: 13.2, c: "#2a5ed4" }, { v: 10.2, c: "#2656c6" }, { v: 8.4, c: "#2450b8" }, { v: 7.5, c: "#234eaf" }, { v: 3.3, c: "#1f46a0" }, { v: 4.1, c: "#e0303e" }, { v: 10, c: "#c4202e" }, { v: 1.6, c: "#b01c2c" },
    ];
    const labs: Lab[] = [
      { t: "일반", p: "14.1%", x: 44.5, y: -98 }, { t: "준최1", p: "6.4%", x: 91.5, y: -53 }, { t: "준최2", p: "21.8%", x: 95, y: 36 }, { t: "준최3", p: "13.2%", x: 8, y: 98 }, { t: "준최4", p: "10.2%", x: -63, y: 76 }, { t: "준최5", p: "8.4%", x: -97, y: 27.5 }, { t: "준최5.5", p: "7.5%", x: -101, y: -24 }, { t: "준최6", p: "3.3%", x: -90, y: -56 }, { t: "최적1", p: "4.1%", x: -78, y: -74 }, { t: "최적2", p: "10.0%", x: -44, y: -98 },
    ];
    const gear = (s: number) => html`<svg width=${s} height=${s} viewBox="0 0 24 24" fill="none" stroke="currentColor" stroke-width="1.3"><circle cx="12" cy="12" r="3.5"/><path d="M12 1.5l2 3 3.5-.8 1 3.4 3.4 1-.8 3.4 2 1.5-2 2 .8 3.4-3.4 1-1 3.4-3.5-.8-2 2.5-2-2.5-3.5.8-1-3.4-3.4-1 .8-3.4-2-2 2-1.5-.8-3.4 3.4-1 1-3.4 3.5.8z"/></svg>`;
    const refresh = html`<svg class="rfn" width="18" height="18" viewBox="0 0 18 18" fill="none" stroke=${TEAL} stroke-width="1.6"><path d="M14.5 5A6.5 6.5 0 0 0 3 7M3.5 13A6.5 6.5 0 0 0 15 11"/><path d="M15 1.5V6h-4.5M3 16.5V12h4.5"/></svg>`;
    const user = (s: number) => html`<svg width=${s} height=${s} viewBox="0 0 24 24" fill="none" stroke=${TEAL} stroke-width="1.7"><circle cx="9" cy="7" r="4.5"/><path d="M2 22v-3a7 5 0 0 1 14 0v3M16 3a4.5 4.5 0 0 1 0 8M19 14a6 5 0 0 1 3 5v3"/></svg>`;
    const card = (ic: unknown, v: string, l: string) => html`<div class="cell"><div class="tile">${ic}</div><div class="cv">${v}<small>${l}</small></div></div>`;
    const caret = html`<svg class="car" width="10" height="6" viewBox="0 0 10 6" fill="none" stroke="currentColor" stroke-width="1.2"><path d="M1 5.5L5 1l4 4.5"/></svg>`;
    return html`
      <header class="bar">
        ${foxLogo(32, 32)}
        <div class="word">블로그연구소</div>
        <div class="iconbtn"><svg width="16" height="14" viewBox="0 0 16 14" stroke="currentColor" stroke-width="2"><path d="M1 2h14M1 7h14M1 12h14"/></svg></div>
        <div class="grow"></div>
        <div class="iconbtn"><svg width="18" height="20" viewBox="0 0 18 20" fill="none" stroke="currentColor" stroke-width="1.3"><path d="M9 2.5c-3 0-5 2-5 6v4l-2 3h14l-2-3v-4c0-4-2-6-5-6zM7 17.5a2 2 0 0 0 4 0M9 1v1.5"/></svg></div>
        <div class="pill">
          <svg width="34" height="34" viewBox="0 0 34 34"><circle cx="17" cy="17" r="17" fill="#b5bfc6"/><circle cx="17" cy="13" r="4.5" fill="#4e6676"/><path d="M7 27c0-6 4-8 10-8s10 2 10 8z" fill="#4e6676"/></svg>
          <span class="gearc">${gear(22)}</span>
        </div>
      </header>
      <div class="body">
        <nav class="nav">
          <div class="cap">네이버블로그</div>
          <div class="mi"><svg width="18" height="18" viewBox="0 0 18 18" fill="none" stroke="currentColor" stroke-width="1.3"><circle cx="9" cy="9" r="7.5"/><circle cx="9" cy="10" r="2.5"/><path d="M10.5 8l2-3.5"/></svg><span class="txt">대시보드</span></div>
          <div class="mi e"><svg width="18" height="18" viewBox="0 0 24 24" fill="none" stroke="currentColor" stroke-width="1.6"><circle cx="9" cy="7" r="4.5"/><path d="M2 22v-3a7 5 0 0 1 14 0v3M16 3a4.5 4.5 0 0 1 0 8M19 14a6 5 0 0 1 3 5v3"/></svg><span class="txt">블로그</span>${caret}</div>
          <div class="subs">${sub1.map((s) => html`<div class="sub"><i></i><span>${s}</span></div>`)}</div>
          <div class="mi e k"><span class="abc">Abc</span><span class="txt">키워드</span>${caret}</div>
          <div class="subs">${sub2.map((s) => html`<div class="sub"><i></i><span>${s}</span></div>`)}</div>
        </nav>
        <main class="main">
          <div class="col g12">
            <section class="card n208">
              <div class="ch a"><span class="who">tkh456</span><svg width="8" height="6" viewBox="0 0 8 6" fill=${TEAL}><path d="M0 0h8L4 6z"/></svg><span class="owner">범범</span><span class="grow"></span>${refresh}</div>
              <div class="st">
                ${card(html`<svg width="26" height="26" viewBox="0 0 26 26" fill="none" stroke="currentColor" stroke-width="2"><path d="M10 5a10 10 0 1 0 11 11H10z"/><path d="M15 2a9 9 0 0 1 9 9h-9z"/></svg>`, "최적1", "지수")}
                ${card(html`<svg width="26" height="26" viewBox="0 0 26 26" fill="none" stroke="currentColor" stroke-width="2"><circle cx="13" cy="13" r="11"/><path d="M17 10a5 5 0 1 0 0 6" stroke-width="2.2"/></svg>`, "59.31", "C-RANK")}
                ${card(user(26), "4,883", "평균 방문자")}
                ${card(html`<svg width="26" height="26" viewBox="0 0 26 26" fill="none" stroke="currentColor" stroke-width="2"><path d="M14 22H3V5h20v8M3 10h20M8 2v5M18 2v5"/><circle cx="20" cy="20" r="4" fill="currentColor"/></svg>`, "21", "한달 게시물")}
              </div>
            </section>
            <section class="card n538">
              <div class="ch"><span>지수 분포</span></div>
              ${pie(564, 308, 154, 127.5, data, labs)}
            </section>
          </div>
          <div class="col">
            <section class="card n758">
              <div class="ch"><span>순위 모니터링</span><span class="grow"></span>${refresh}<svg class="plusi" width="14" height="14" viewBox="0 0 14 14" stroke=${TEAL} stroke-width="1.7"><path d="M7 0v14M0 7h14"/></svg></div>
            </section>
          </div>
          <div class="col g14">
            <section class="card n316">
              <div class="ch"><span>블로그 진단</span></div>
              <div class="idh">블로그 ID</div>
              <div class="idr">tkh456</div>
            </section>
            <section class="card n428">
              <div class="ch t"><span>구매자 단톡방</span></div>
              <div class="chat">${newChats.map((c) => html`<div class="b">${c}</div>`)}</div>
            </section>
          </div>
        </main>
      </div>
      <div class="foot">상호명 : 풀스택(FullStack) / 대표자명 : 강기창 / 사업자등록번호 : 541-71-00345 / 사업장 주소 : 경기도 광주시 새말길 81-14, 조강브릭스 지1층 B01호(신현동) / 유선번호 : 010-5522-5960 / 통신판매업 신고번호 : 2023-경기광주-1549호</div>
      <div class="hs"><div></div></div>
      <div class="fab">${gear(22)}</div>
    `;
  }
}

@customElement("app-root")
class AppRoot extends LitElement {
  static styles = css`
    :host { display: block; width: 3840px; height: 1080px; overflow: hidden; }
    .wrap { display: flex; width: 3840px; height: 1080px; }
  `;
  render(): TemplateResult {
    return html`<div class="wrap">
      <browser-window .active=${1} host="lablog.co.kr" pageTitle="대시보드" time="8:23"><old-dash></old-dash></browser-window>
      <browser-window .active=${0} host="lablog.kr" pageTitle="블로그연구소" time="8:24" .keyIcon=${true}><new-dash></new-dash></browser-window>
    </div>`;
  }
}
